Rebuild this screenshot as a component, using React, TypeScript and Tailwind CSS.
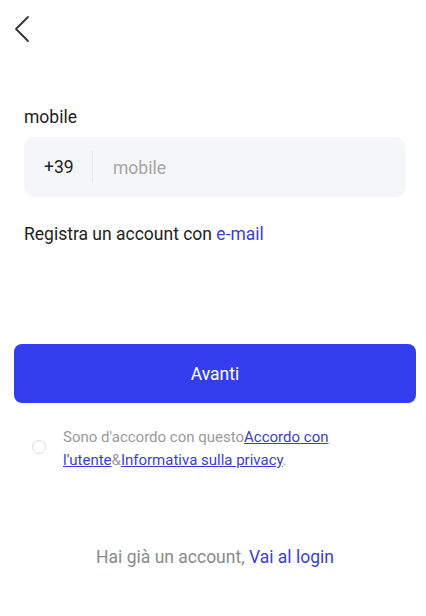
import React from 'react';

const font = { fontFamily: 'Roboto, "Noto Sans", sans-serif' };

export default function App() {
  return (
    <div className="w-[426px] h-[616px] bg-white relative overflow-hidden" style={font}>
      {/* back */}
      <div className="pt-[15px] pl-[13px] h-[107px]">
        <svg width="18" height="28" viewBox="0 0 18 28" fill="none">
          <path d="M15 2 L3 14 L15 26" stroke="#333" strokeWidth="1.8" strokeLinecap="round" strokeLinejoin="round" />
        </svg>
      </div>

      <div className="pl-[24px]">
        <div className="text-[17.5px] leading-[20px] text-[#222]">mobile</div>
        <div className="mt-[10px] w-[382px] h-[60px] rounded-[10px] bg-[#f5f6f8] flex items-center">
          <span className="pl-[20px] w-[68px] text-[17.5px] text-[#222]">+39</span>
          <div className="w-px h-[32px] bg-[#e3e4e8]" />
          <span className="pl-[20px] pt-[3px] text-[17.5px] text-[#a5a5a5]">mobile</span>
        </div>
        <div className="mt-[25px] text-[17.5px] leading-[24px] text-[#222]">
          Registra un account con <span className="text-[#3a3fd1]">e-mail</span>
        </div>
      </div>

      <div className="pl-[14px] mt-[98px]">
        <button className="w-[402px] h-[59px] rounded-[8px] bg-[#333ded] text-white text-[17.5px] pt-[2px]">Avanti</button>
      </div>

      <div className="flex mt-[23px] pl-[32px]">
        <div className="mt-[14px] w-[14px] h-[14px] rounded-full border border-[#dcdcdc] shrink-0" />
        <p className="ml-[17px] w-[290px] text-[15px] leading-[23px] text-[#9a9a9a]">
          <span>Sono d'accordo con questo</span><span className="text-[#3a3fd1] underline">Accordo con</span>
          <br />
          <span className="text-[#3a3fd1] underline">l'utente</span><span>&amp;</span><span className="text-[#3a3fd1] underline">Informativa sulla privacy</span><span>.</span>
        </p>
      </div>

      <div className="absolute left-0 right-0 top-[546px] pl-[4px] text-center text-[17.5px] leading-[22px] text-[#8a8a8a]">
        Hai già un account, <span className="text-[#3a3fd1]">Vai al login</span>
      </div>
    </div>
  );
}
